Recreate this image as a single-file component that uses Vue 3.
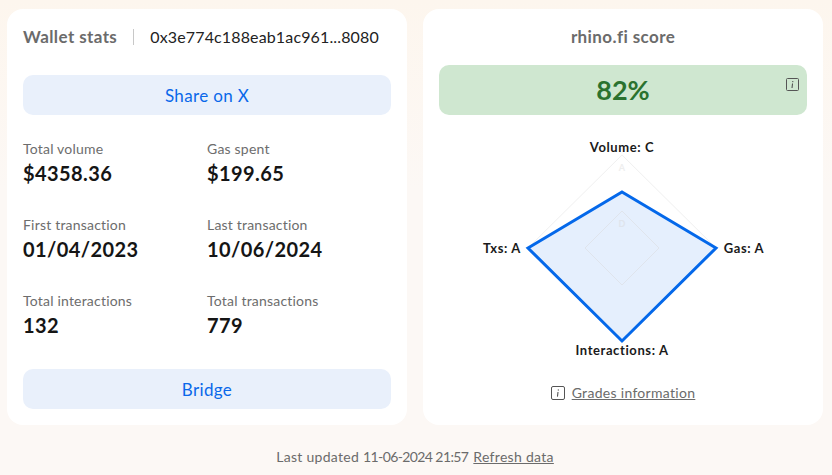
<template>
  <div class="page">
    <main class="cards">
      <section class="card">
        <header class="wallet-head">
          <h2 class="title">Wallet stats</h2>
          <span class="address">0x3e774c188eab1ac961...8080</span>
        </header>
        <button class="btn share">Share on X</button>
        <div class="stats">
          <div v-for="s in stats" :key="s.label" class="stat">
            <div class="label">{{ s.label }}</div>
            <div class="value">{{ s.value }}</div>
          </div>
        </div>
        <button class="btn bridge">Bridge</button>
      </section>
      <section class="card score-card">
        <h2 class="title center">rhino.fi score</h2>
        <div class="score">
          82%
          <svg class="score-info" width="13" height="13" viewBox="0 0 13 13"><rect x=".5" y=".5" width="12" height="12" rx="1" fill="none" stroke="#555" /><path d="M6.8 3v1.2M6.5 5.5 6 10" stroke="#444" fill="none" /></svg>
        </div>
        <svg class="radar" width="368" height="228" viewBox="0 0 368 228">
          <path d="M183 25 277 118 183 211 89 118Z" fill="none" stroke="#f0f0f0" />
          <path d="M183 62 277 118 183 211 89 118Z" fill="#0066ee" fill-opacity=".1" stroke="#0468ea" stroke-width="3" stroke-linejoin="miter" />
          <path d="M183 81 220 118 183 155 146 118Z" fill="none" stroke="#dfe4ec" />
          <text x="183" y="41" class="grid">A</text>
          <text x="183" y="97" class="grid grid-d">D</text>
          <text x="183" y="22" class="axis">Volume: C</text>
          <text x="305" y="123" class="axis">Gas: A</text>
          <text x="63" y="123" class="axis">Txs: A</text>
          <text x="183" y="225" class="axis">Interactions: A</text>
        </svg>
        <div class="grades">
          <svg width="14" height="14" viewBox="0 0 14 14"><rect x=".5" y=".5" width="13" height="13" rx="1.5" fill="none" stroke="#555" /><path d="M7.3 3.4v1.2M7 6 6.5 10.6" stroke="#444" fill="none" /></svg>
          <a class="link">Grades information</a>
        </div>
      </section>
    </main>
    <footer class="foot">
      <span>Last updated <span class="date">11-06-2024 21:57</span></span>
      <a class="link">Refresh data</a>
    </footer>
  </div>
</template>

<script setup>
const stats = [
  { label: 'Total volume', value: '$4358.36' },
  { label: 'Gas spent', value: '$199.65' },
  { label: 'First transaction', value: '01/04/2023' },
  { label: 'Last transaction', value: '10/06/2024' },
  { label: 'Total interactions', value: '132' },
  { label: 'Total transactions', value: '779' }
]
</script>

<style>
html, body { margin: 0; background: #fcf8f4; }
</style>

<style scoped>
.page {
  width: 832px;
  height: 475px;
  box-sizing: border-box;
  padding: 9px 9px 0 7px;
  font-family: Lato, "Noto Sans", sans-serif;
  font-variant-ligatures: none;
  color: #151515;
  background: linear-gradient(#fdf6ee, #fcf8f5 40%);
  overflow: hidden;
}
.cards { display: flex; gap: 16px; }
.card {
  width: 400px;
  height: 416px;
  box-sizing: border-box;
  background: #fff;
  border-radius: 16px;
  padding: 0 16px;
  display: flex;
  flex-direction: column;
}
.wallet-head { display: flex; align-items: center; height: 56px; }
.title { margin: 0; font-size: 17px; font-weight: 700; color: #6b6b6b; line-height: 56px; letter-spacing: .4px; }
.center { text-align: center; }
.address {
  margin-left: 16px;
  padding-left: 16px;
  border-left: 1px solid #c8c8c8;
  font-size: 16px;
  line-height: 16px;
  letter-spacing: .14px;
  color: #222;
}
.btn {
  display: block;
  width: 100%;
  height: 40px;
  border: 0;
  border-radius: 10px;
  background: #e9f0fb;
  color: #0a68ea;
  font: 400 17px Lato, sans-serif;
  letter-spacing: .35px;
}
.share { margin-top: 10px; }
.stats {
  display: grid;
  grid-template-columns: 184px 184px;
  grid-auto-rows: 76px;
  padding-top: 25px;
  height: 229px;
  box-sizing: border-box;
  margin-bottom: 25px;
}
.label { font-size: 14px; line-height: 18px; color: #6d6d6d; letter-spacing: .2px; }
.value { font-size: 20px; line-height: 26px; font-weight: 700; margin-top: 2px; letter-spacing: .4px; }
.score {
  position: relative;
  height: 50px;
  border-radius: 10px;
  background: #cfe7d0;
  color: #2b722f;
  font-size: 27px;
  font-weight: 700;
  line-height: 50px;
  text-align: center;
}
.score-info { position: absolute; top: 13px; right: 8px; }
.radar { display: block; margin-top: 15px; }
.axis { font-size: 13px; font-weight: 700; text-anchor: middle; fill: #1a1a1a; letter-spacing: .6px; }
.grid { font-size: 9px; font-weight: 700; text-anchor: middle; fill: #eeeeee; }
.grid-d { fill: #dfe4ec; }
.grades { display: flex; align-items: center; justify-content: center; gap: 7px; margin-top: 26px; }
.link { font-size: 14px; color: #6b6b6b; text-decoration: underline; letter-spacing: .3px; }
.foot {
  display: flex;
  justify-content: center;
  gap: 5px;
  margin-top: 23px;
  font-size: 14px;
  line-height: 18px;
  color: #6b6b6b;
  letter-spacing: .3px;
}
.date { letter-spacing: -.6px; }
</style>
